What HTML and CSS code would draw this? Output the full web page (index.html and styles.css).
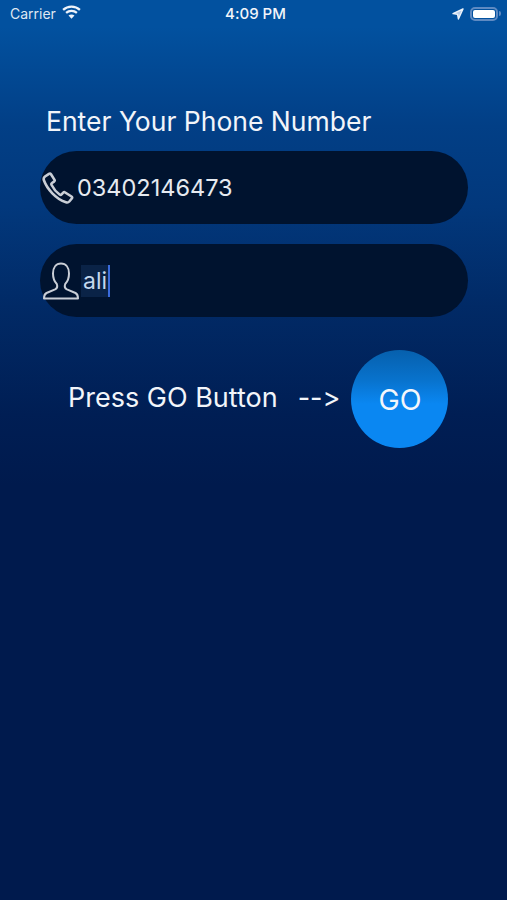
FILE: index.html
```html
<!DOCTYPE html>
<html lang="en">
<head>
<meta charset="utf-8">
<title>Phone Number</title>
<link rel="stylesheet" href="styles.css">
</head>
<body>
<div class="screen">
  <div class="status">
    <div class="status-left">
      <span>Carrier</span>
      <svg class="wifi" viewBox="0 0 20 15"><path d="M1 5.200C6 .6 14 .6 19 5.200" fill="none" stroke="#eef3fa" stroke-width="2.400"/><path d="M4.200 8.500c3.300-3 8.300-3 11.600 0" fill="none" stroke="#eef3fa" stroke-width="2.400"/><path d="M10 14.600 6.800 11.300c1.800-1.500 4.600-1.500 6.400 0z" fill="#eef3fa"/></svg>
    </div>
    <div class="status-time">4:09 PM</div>
    <div class="status-right">
      <svg class="loc" viewBox="0 0 12 12"><path d="M11 1 1 5.600l4.600.8.8 4.600z" fill="#b9cde8" stroke="#eef3fa" stroke-width="1.400" stroke-linejoin="round"/></svg>
      <div class="battery"><div class="battery-fill"></div></div>
      <div class="battery-nub"></div>
    </div>
  </div>
  <main class="content">
    <h1 class="title">Enter Your Phone Number</h1>
    <div class="field">
      <svg class="icon-phone" viewBox="0 0 32 32"><path d="M3 4.500 7 1.800c.8-.5 1.500-.3 2 .4l3.400 5.400c.5.800.3 1.500-.4 2L10 11c-.7.500-.8 1.200-.4 2 1.500 3 4.500 7 8 9.500.8.500 1.400.5 2-.1l1.600-1.700c.6-.6 1.300-.7 2-.2l6.300 4c.8.500.9 1.300.3 2l-2.500 3c-.8.900-2 1.200-3.300.8C14 27 5 17 1.800 8c-.4-1.400.1-2.600 1.200-3.500z" fill="none" stroke="#c9ced6" stroke-width="2.600" stroke-linejoin="round"/></svg>
      <span class="field-text">03402146473</span>
    </div>
    <div class="field field-name">
      <svg class="icon-user" viewBox="0 0 36 38"><path d="M18 1.500c-5 0-8 4-8 10 0 4.500 1.800 8.500 3.800 10.500.8 2.200.3 4.300-1.700 5.300L3.500 31c-1.600.8-2.500 2.300-2.500 5.500h34c0-3.200-.9-4.700-2.500-5.500l-8.600-3.700c-2-1-2.500-3.100-1.700-5.300C24.200 20 26 16 26 11.500c0-6-3-10-8-10z" fill="none" stroke="#c9ced6" stroke-width="2" stroke-linejoin="round"/></svg>
      <span class="selection">ali</span><span class="caret"></span>
    </div>
    <div class="go-row">
      <span class="go-label">Press GO Button</span>
      <span class="go-arrow">--&gt;</span>
      <button class="go-button">GO</button>
    </div>
  </main>
</div>
</body>
</html>
```
FILE: styles.css
```css
* { box-sizing: border-box; }
html, body { margin: 0; height: 100%; }
body {
  font-family: Inter, "Liberation Sans", sans-serif;
  font-variant-ligatures: none;
  font-feature-settings: "calt" 0, "liga" 0;
  color: #f2f5fa;
}
.screen {
  width: 507px;
  height: 900px;
  overflow: hidden;
  background: linear-gradient(180deg, #02519f 0%, #02519f 3%, #023f86 14%, #02387c 23%, #012a66 34%, #001e54 46%, #001a4d 54%, #001a4d 100%);
}
.status {
  height: 27px;
  padding: 0 6px 0 10px;
  display: grid;
  grid-template-columns: 1fr auto 1fr;
  align-items: center;
  font-size: 14px;
}
.status-left { display: flex; align-items: center; gap: 6px; color: #dfe7f2; }
.wifi { width: 19px; height: 14px; margin-top: -3px; }
.status-time { font-weight: 500; font-size: 15px; }
.status-right { display: flex; justify-content: flex-end; align-items: center; }
.loc { width: 12px; height: 12px; margin-right: 6px; }
.battery {
  width: 28px;
  height: 14px;
  border: 2px solid #5f8ac2;
  border-radius: 5px;
  padding: 1px;
}
.battery-fill { width: 100%; height: 100%; background: #fff; border-radius: 2px; }
.battery-nub { width: 2px; height: 5px; background: #5f8ac2; border-radius: 0 2px 2px 0; margin-left: 1px; }
.content { padding: 0 39px 0 40px; }
.title {
  margin: 76px 0 0 6px;
  font-size: 26.500px;
  line-height: 36px;
  font-weight: 400;
}
.field {
  height: 73px;
  margin-top: 12px;
  border-radius: 36.500px;
  background: #00132f;
  display: flex;
  align-items: center;
  font-size: 23.500px;
}
.field-name { margin-top: 20px; }
.icon-phone { width: 32px; height: 32px; margin: 0 3px 0 2px; flex: none; }
.icon-user { width: 36px; height: 38px; margin: 0 2px 0 3px; flex: none; }
.field-text { color: #e6eaf0; }
.selection {
  background: #0a2347;
  color: #c4d8ee;
  font-size: 23px;
  line-height: 32px;
  padding: 0 1px 0 2px;
}
.caret { width: 2px; height: 32px; background: #3a6bdc; }
.go-row { display: flex; align-items: center; margin: 33px 0 0 28px; }
.go-label { font-size: 27px; margin-top: -4px; }
.go-arrow { font-size: 27px; margin: -4px 11px 0 20px; }
.go-button {
  width: 97px;
  height: 98px;
  border: 0;
  border-radius: 50%;
  background: linear-gradient(180deg, #0660ad 0%, #0872cc 30%, #0a87f2 55%, #0a87f2 100%);
  color: #f2f6fb;
  font: 400 28.500px Inter, "Liberation Sans", sans-serif;
  padding: 0;
}
```
